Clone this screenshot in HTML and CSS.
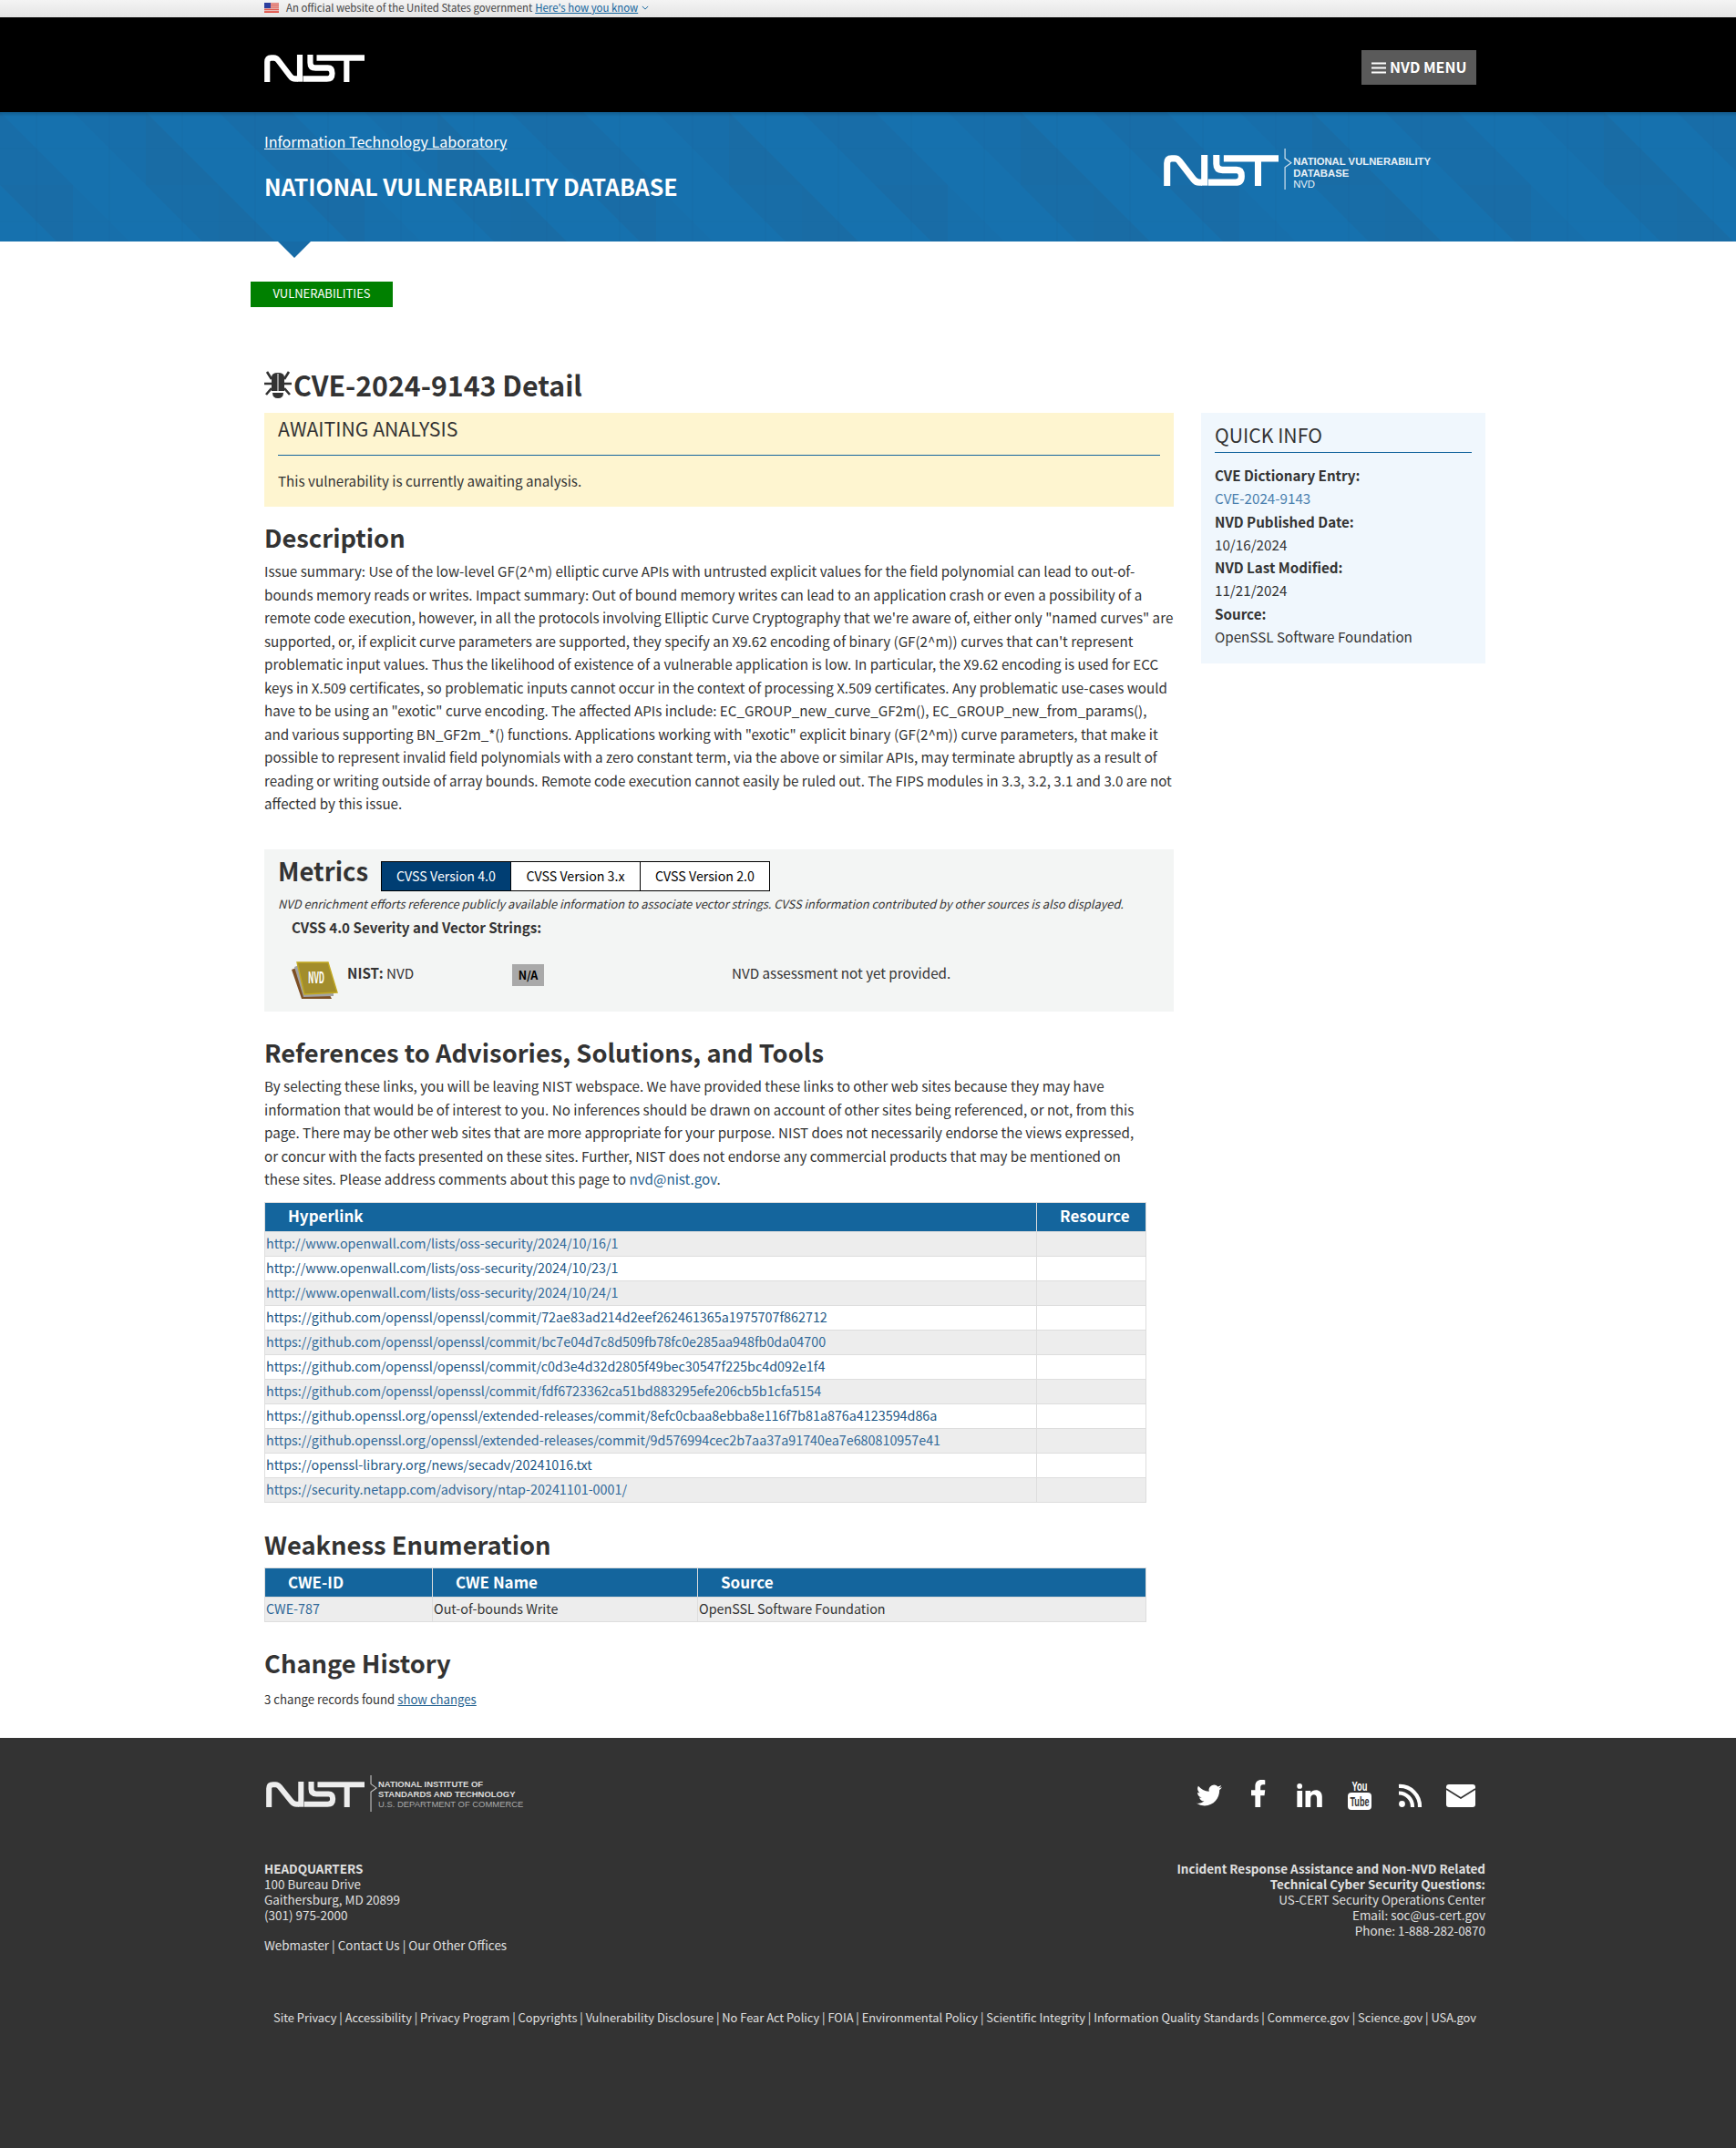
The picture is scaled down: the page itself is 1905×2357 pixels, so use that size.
FILE: index.html
```html
<!DOCTYPE html>
<html lang="en">
<head>
  <meta charset="UTF-8">
  <title>NVD - CVE-2024-9143</title>
  <link rel="stylesheet" href="styles.css">
</head>
<body>

  <svg class="defs" width="0" height="0">
    <symbol id="nist" viewBox="0 0 375 97" preserveAspectRatio="none">
      <g fill="none" stroke="currentColor" stroke-width="21">
        <path d="M11 97V26Q11 11 26 11H36Q45 11 51 19L97 76Q105 86 116 86H125"/>
        <path d="M133 0V96"/>
        <path d="M172 0V28Q172 47 192 47H238Q254 47 254 66Q254 86 234 86H145"/>
        <path d="M196 11H375"/>
        <path d="M308 11V97"/>
      </g>
    </symbol>
    <symbol id="notch" viewBox="0 0 10 46">
      <path d="M1 0V11L8 16L1 21V46" fill="none" stroke="currentColor" stroke-width="1.2"/>
    </symbol>
    <pattern id="tris" width="320" height="160" patternUnits="userSpaceOnUse">
      <rect width="320" height="160" fill="#1671ae"/>
      <polygon points="0,0 80,80 0,80" fill="#186da8"/>
      <polygon points="80,0 160,0 160,80" fill="#176eaa"/>
      <polygon points="160,0 240,80 160,80" fill="#196ca5"/>
      <polygon points="240,0 320,0 320,80" fill="#186da8"/>
      <polygon points="0,80 80,80 80,160" fill="#196ca6"/>
      <polygon points="80,80 160,160 80,160" fill="#176fab"/>
      <polygon points="160,80 240,80 240,160" fill="#186da7"/>
      <polygon points="240,80 320,160 240,160" fill="#196ca5"/>
      <path d="M40 0V160M120 0V160M200 0V160M280 0V160" stroke="#125f96" stroke-opacity=".25" stroke-width="1"/>
      <path d="M0 40H320M0 120H320" stroke="#125f96" stroke-opacity=".12" stroke-width="1"/>
    </pattern>
  </svg>

  <div class="gov-banner">
    <div class="wrap gov-inner">
      <svg class="flag" viewBox="0 0 16 11">
        <rect width="16" height="11" fill="#e8e8e8"/>
        <path d="M0 .8H16M0 2.5H16M0 4.2H16M0 5.9H16M0 7.6H16M0 9.3H16M0 10.5H16" stroke="#e0392b" stroke-width=".9"/>
        <rect width="7" height="6" fill="#2d3f9e"/>
      </svg>
      <span>An official website of the United States government</span>
      <a href="#">Here's how you know</a>
      <svg class="chev" viewBox="0 0 10 6"><path d="M1 1L5 5L9 1" fill="none" stroke="#14659d" stroke-width="1.2"/></svg>
    </div>
  </div>

  <header class="top-bar">
    <div class="wrap top-inner">
      <svg class="logo-main"><use href="#nist"/></svg>
      <button class="menu-btn">
        <svg class="burger" viewBox="0 0 16 13"><path d="M0 1.5H16M0 6.5H16M0 11.5H16" stroke="#fff" stroke-width="2.2"/></svg>
        NVD MENU
      </button>
    </div>
  </header>

  <section class="hero">
    <svg class="hero-bg"><rect width="100%" height="100%" fill="url(#tris)"/></svg>
    <div class="wrap hero-inner">
      <div>
        <a class="itl" href="#">Information Technology Laboratory</a>
        <div class="hero-title">NATIONAL VULNERABILITY DATABASE</div>
      </div>
      <div class="lockup hero-lockup">
        <svg class="lockup-nist"><use href="#nist"/></svg>
        <svg class="lockup-notch"><use href="#notch"/></svg>
        <div class="lockup-text">
          <b>NATIONAL VULNERABILITY</b>
          <b>DATABASE</b>
          <span>NVD</span>
        </div>
      </div>
    </div>
    <div class="hero-arrow"></div>
  </section>

  <main class="wrap">
    <a class="tab-green" href="#">VULNERABILITIES</a>

    <h2 class="page-title">
      <svg class="bug" viewBox="0 0 30 30">
        <path d="M8 7Q8 2 15 2Q22 2 22 7V22H8Z" fill="#333"/>
        <path d="M15 3V22" stroke="#fff" stroke-width="1"/>
        <path d="M9 24H21Q21 30 15 30Q9 30 9 24Z" fill="#333"/>
        <path d="M8 9L3 1M8 14H0M8 19L2 26M22 9L27 1M22 14H30M22 19L28 26" stroke="#333" stroke-width="2.6" fill="none"/>
      </svg>CVE-2024-9143 Detail
    </h2>

    <div class="columns">
      <div class="main-col">
        <div class="notice">
          <h3>AWAITING ANALYSIS</h3>
          <p>This vulnerability is currently awaiting analysis.</p>
        </div>

        <h3 class="section-head desc-head">Description</h3>
        <p class="desc">Issue summary: Use of the low-level GF(2^m) elliptic curve APIs with untrusted explicit values for the field polynomial can lead to out-of-bounds memory reads or writes. Impact summary: Out of bound memory writes can lead to an application crash or even a possibility of a remote code execution, however, in all the protocols involving Elliptic Curve Cryptography that we're aware of, either only "named curves" are supported, or, if explicit curve parameters are supported, they specify an X9.62 encoding of binary (GF(2^m)) curves that can't represent problematic input values. Thus the likelihood of existence of a vulnerable application is low. In particular, the X9.62 encoding is used for ECC keys in X.509 certificates, so problematic inputs cannot occur in the context of processing X.509 certificates. Any problematic use-cases would have to be using an "exotic" curve encoding. The affected APIs include: EC_GROUP_new_curve_GF2m(), EC_GROUP_new_from_params(), and various supporting BN_GF2m_*() functions. Applications working with "exotic" explicit binary (GF(2^m)) curve parameters, that make it possible to represent invalid field polynomials with a zero constant term, via the above or similar APIs, may terminate abruptly as a result of reading or writing outside of array bounds. Remote code execution cannot easily be ruled out. The FIPS modules in 3.3, 3.2, 3.1 and 3.0 are not affected by this issue.</p>

        <div class="metrics">
          <div class="metrics-top">
            <h3>Metrics</h3>
            <div class="tabs">
              <a class="tab active" href="#">CVSS Version 4.0</a>
              <a class="tab" href="#">CVSS Version 3.x</a>
              <a class="tab" href="#">CVSS Version 2.0</a>
            </div>
          </div>
          <p class="metrics-note">NVD enrichment efforts reference publicly available information to associate vector strings. CVSS information contributed by other sources is also displayed.</p>
          <div class="metrics-sub">CVSS 4.0 Severity and Vector Strings:</div>
          <div class="score-row">
            <div class="score-cna">
              <svg class="nvd-book" viewBox="0 0 50 40">
                <polygon points="0,8 5,6 42,36 44,40 11,40" fill="#7d4f24"/>
                <polygon points="3,5 8,3 46,33 46,37 13,38" fill="#a3a3a3"/>
                <polygon points="6,0 40,0 50,33 14,35" fill="#a28d2c" stroke="#c2a920" stroke-width="1.4"/>
                <text class="nvd-book-text" x="27" y="23" text-anchor="middle" textLength="18" lengthAdjust="spacingAndGlyphs">NVD</text>
              </svg>
              <span><b>NIST:</b> NVD</span>
            </div>
            <div><span class="badge">N/A</span></div>
            <div>NVD assessment not yet provided.</div>
          </div>
        </div>

        <h3 class="section-head refs-head">References to Advisories, Solutions, and Tools</h3>
        <p class="refs-text">By selecting these links, you will be leaving NIST webspace. We have provided these links to other web sites because they may have information that would be of interest to you. No inferences should be drawn on account of other sites being referenced, or not, from this page. There may be other web sites that are more appropriate for your purpose. NIST does not necessarily endorse the views expressed, or concur with the facts presented on these sites. Further, NIST does not endorse any commercial products that may be mentioned on these sites. Please address comments about this page to <a href="#">nvd@nist.gov</a>.</p>

        <table class="grid refs-table">
          <thead>
            <tr><th class="col-link">Hyperlink</th><th>Resource</th></tr>
          </thead>
          <tbody>
            <tr><td><a href="#">http://www.openwall.com/lists/oss-security/2024/10/16/1</a></td><td></td></tr>
            <tr><td><a href="#">http://www.openwall.com/lists/oss-security/2024/10/23/1</a></td><td></td></tr>
            <tr><td><a href="#">http://www.openwall.com/lists/oss-security/2024/10/24/1</a></td><td></td></tr>
            <tr><td><a href="#">https://github.com/openssl/openssl/commit/72ae83ad214d2eef262461365a1975707f862712</a></td><td></td></tr>
            <tr><td><a href="#">https://github.com/openssl/openssl/commit/bc7e04d7c8d509fb78fc0e285aa948fb0da04700</a></td><td></td></tr>
            <tr><td><a href="#">https://github.com/openssl/openssl/commit/c0d3e4d32d2805f49bec30547f225bc4d092e1f4</a></td><td></td></tr>
            <tr><td><a href="#">https://github.com/openssl/openssl/commit/fdf6723362ca51bd883295efe206cb5b1cfa5154</a></td><td></td></tr>
            <tr><td><a href="#">https://github.openssl.org/openssl/extended-releases/commit/8efc0cbaa8ebba8e116f7b81a876a4123594d86a</a></td><td></td></tr>
            <tr><td><a href="#">https://github.openssl.org/openssl/extended-releases/commit/9d576994cec2b7aa37a91740ea7e680810957e41</a></td><td></td></tr>
            <tr><td><a href="#">https://openssl-library.org/news/secadv/20241016.txt</a></td><td></td></tr>
            <tr><td><a href="#">https://security.netapp.com/advisory/ntap-20241101-0001/</a></td><td></td></tr>
          </tbody>
        </table>

        <h3 class="section-head cwe-head">Weakness Enumeration</h3>
        <table class="grid cwe-table">
          <thead>
            <tr><th class="col-id">CWE-ID</th><th class="col-name">CWE Name</th><th>Source</th></tr>
          </thead>
          <tbody>
            <tr><td><a href="#">CWE-787</a></td><td>Out-of-bounds Write</td><td>OpenSSL Software Foundation</td></tr>
          </tbody>
        </table>

        <h3 class="section-head hist-head">Change History</h3>
        <p class="hist-text">3 change records found <a href="#">show changes</a></p>
      </div>

      <aside class="quick-info">
        <h3>QUICK INFO</h3>
        <dl>
          <dt>CVE Dictionary Entry:</dt>
          <dd><a href="#">CVE-2024-9143</a></dd>
          <dt>NVD Published Date:</dt>
          <dd>10/16/2024</dd>
          <dt>NVD Last Modified:</dt>
          <dd>11/21/2024</dd>
          <dt>Source:</dt>
          <dd>OpenSSL Software Foundation</dd>
        </dl>
      </aside>
    </div>
  </main>

  <footer class="site-footer">
    <div class="wrap">
      <div class="foot-top">
        <div class="lockup foot-lockup">
          <svg class="lockup-nist"><use href="#nist"/></svg>
          <svg class="lockup-notch"><use href="#notch"/></svg>
          <div class="lockup-text">
            <b>NATIONAL INSTITUTE OF</b>
            <b>STANDARDS AND TECHNOLOGY</b>
            <span>U.S. DEPARTMENT OF COMMERCE</span>
          </div>
        </div>
        <div class="social">
          <svg class="ic-twitter" viewBox="0 0 24 24"><path d="M23.953 4.57a10 10 0 01-2.825.775 4.958 4.958 0 002.163-2.723c-.951.555-2.005.959-3.127 1.184a4.92 4.92 0 00-8.384 4.482C7.69 8.095 4.067 6.13 1.64 3.162a4.822 4.822 0 00-.666 2.475c0 1.71.87 3.213 2.188 4.096a4.904 4.904 0 01-2.228-.616v.06a4.923 4.923 0 003.946 4.827 4.996 4.996 0 01-2.212.085 4.936 4.936 0 004.604 3.417 9.867 9.867 0 01-6.102 2.105c-.39 0-.779-.023-1.17-.067a13.995 13.995 0 007.557 2.209c9.053 0 13.998-7.496 13.998-13.985 0-.21 0-.42-.015-.63A9.935 9.935 0 0024 4.59z"/></svg>
          <svg class="ic-fb" viewBox="7 2 11 20" preserveAspectRatio="none"><path d="M14 13.5h3l.5-4H14v-2c0-1.03.3-2 2-2h1.5V2.14c-.326-.043-1.557-.14-2.857-.14C11.928 2 10 3.657 10 6.7v2.8H7v4h3V22h4v-8.5z"/></svg>
          <svg class="ic-in" viewBox="2.9 3 19.1 18"><path d="M6.94 5a2 2 0 1 1-4-.002 2 2 0 0 1 4 .002zM7 8.48H3V21h4V8.48zm6.32 0H9.34V21h3.94v-6.57c0-3.66 4.77-4 4.77 0V21H22v-7.93c0-6.17-7.06-5.94-8.72-2.91l.04-1.68z"/></svg>
          <svg class="ic-yt" viewBox="0 0 26 33">
            <text class="yt-you" x="13" y="12" text-anchor="middle" textLength="17" lengthAdjust="spacingAndGlyphs">You</text>
            <rect x="0" y="14" width="26" height="19" rx="4"/>
            <text class="yt-tube" x="13" y="29" text-anchor="middle" textLength="21" lengthAdjust="spacingAndGlyphs">Tube</text>
          </svg>
          <svg class="ic-rss" viewBox="0 0 25 25">
            <circle cx="3.5" cy="21.5" r="3.4"/>
            <path d="M0 9.5A15 15 0 0 1 15 25M0 2A22 22 0 0 1 23 25" fill="none" stroke="#fff" stroke-width="4.2"/>
          </svg>
          <svg class="ic-mail" viewBox="0 0 32 25">
            <rect width="32" height="25" rx="3"/>
            <path d="M0 5L16 15L32 5" fill="none" stroke="#333" stroke-width="1.6"/>
          </svg>
        </div>
      </div>

      <div class="foot-info">
        <div>
          <address>
            <b>HEADQUARTERS</b><br>
            100 Bureau Drive<br>
            Gaithersburg, MD 20899<br>
            (301) 975-2000
          </address>
          <p class="foot-contact"><a href="#">Webmaster</a> | <a href="#">Contact Us</a> | <a href="#">Our Other Offices</a></p>
        </div>
        <div class="foot-right">
          <b>Incident Response Assistance and Non-NVD Related</b><br>
          <b>Technical Cyber Security Questions:</b><br>
          US-CERT Security Operations Center<br>
          Email: soc@us-cert.gov<br>
          Phone: 1-888-282-0870
        </div>
      </div>

      <p class="foot-links"><a href="#">Site Privacy</a> | <a href="#">Accessibility</a> | <a href="#">Privacy Program</a> | <a href="#">Copyrights</a> | <a href="#">Vulnerability Disclosure</a> | <a href="#">No Fear Act Policy</a> | <a href="#">FOIA</a> | <a href="#">Environmental Policy</a> | <a href="#">Scientific Integrity</a> | <a href="#">Information Quality Standards</a> | <a href="#">Commerce.gov</a> | <a href="#">Science.gov</a> | <a href="#">USA.gov</a></p>
    </div>
  </footer>

</body>
</html>
```

FILE: styles.css
```css
* {
  box-sizing: border-box;
}

body {
  margin: 0;
  font-family: "Noto Sans CJK SC", "Noto Sans", sans-serif;
  font-size: 15.2px;
  line-height: 25.5px;
  color: #333;
  background: #fff;
}

a {
  color: #1f5f8f;
  text-decoration: none;
}

.defs {
  position: absolute;
}

.wrap {
  width: 1340px;
  margin-left: 290px;
}

/* gov banner */
.gov-banner {
  height: 19px;
  background: linear-gradient(#f4f4f4, #e4e4e4);
  font-size: 11.4px;
  line-height: 17px;
  color: #444;
}

.gov-inner {
  display: flex;
  align-items: center;
  gap: 3px;
}

.flag {
  width: 16px;
  height: 11px;
  margin-right: 5px;
}

.gov-banner a {
  color: #14659d;
  text-decoration: underline;
}

.chev {
  width: 8px;
  height: 5px;
  margin-left: 1px;
}

/* header */
.top-bar {
  height: 104px;
  background: #000;
  color: #fff;
}

.top-inner {
  height: 104px;
  display: flex;
  justify-content: space-between;
  align-items: flex-start;
  padding-right: 10px;
}

.logo-main {
  width: 110px;
  height: 30px;
  margin-top: 41px;
}

.menu-btn {
  display: flex;
  align-items: center;
  gap: 4px;
  width: 126px;
  height: 38px;
  margin-top: 36px;
  padding: 0 0 2px 11px;
  border: 0;
  background: #5a5a5a;
  color: #fff;
  font: bold 16px "Noto Sans CJK SC", sans-serif;
}

.burger {
  width: 16px;
  height: 13px;
  margin-top: 2px;
}

/* blue band */
.hero {
  position: relative;
  height: 142px;
  color: #fff;
}

.hero-bg {
  position: absolute;
  left: 0;
  top: 0;
  width: 100%;
  height: 100%;
}

.hero::before {
  content: "";
  position: absolute;
  left: 0;
  right: 0;
  top: 0;
  height: 5px;
  z-index: 1;
  background: linear-gradient(rgba(0, 0, 0, .18), rgba(0, 0, 0, 0));
}

.hero-inner {
  position: relative;
  display: flex;
  justify-content: space-between;
}

.itl {
  display: block;
  margin-top: 19px;
  color: #fff;
  font-size: 16.1px;
  line-height: 26px;
  text-decoration: underline;
}

.hero-title {
  margin-top: 18px;
  font-size: 24.9px;
  font-weight: bold;
  line-height: 36px;
}

.hero-arrow {
  position: absolute;
  left: 305px;
  top: 142px;
  border-style: solid;
  border-width: 18px 18px 0;
  border-color: #176ba6 transparent transparent;
}

.lockup {
  display: flex;
  align-items: center;
}

.lockup-nist {
  color: #fff;
}

.lockup-notch {
  color: currentColor;
}

.lockup-text {
  display: flex;
  flex-direction: column;
  font-family: "Liberation Sans", sans-serif;
}

.lockup-text b,
.lockup-text span {
  display: block;
  white-space: nowrap;
}

.hero-lockup {
  margin: 40px 60px 0 0;
  height: 45px;
  color: #d5e4ef;
}

.hero-lockup .lockup-nist {
  width: 126px;
  height: 34px;
  margin-top: 3px;
}

.hero-lockup .lockup-notch {
  width: 10px;
  height: 45px;
  margin-left: 6px;
}

.hero-lockup .lockup-text {
  padding-top: 9px;
  font-size: 11.3px;
  line-height: 12.5px;
  color: #e8f0f6;
}

.hero-lockup .lockup-text span {
  font-weight: normal;
}

/* main */
.tab-green {
  display: block;
  width: 156px;
  height: 28px;
  margin: 44px 0 0 -15px;
  background: #008000;
  color: #fff;
  font-size: 13px;
  line-height: 26px;
  text-align: center;
}

.page-title {
  display: flex;
  align-items: center;
  gap: 2px;
  margin: 65px 0 11px;
  font-size: 30.3px;
  line-height: 40px;
  font-weight: bold;
}

.bug {
  width: 30px;
  height: 30px;
}

.columns {
  display: grid;
  grid-template-columns: 998px 312px;
  gap: 30px;
  align-items: start;
}

.notice {
  height: 103px;
  padding: 0 15px;
  background: #fef5d0;
}

.notice h3 {
  margin: 0;
  height: 47px;
  border-bottom: 1px solid #14659d;
  font-size: 21.2px;
  line-height: 34px;
  font-weight: normal;
}

.notice p {
  margin: 15px 0 0;
}

.section-head {
  margin: 0;
  font-size: 27.3px;
  line-height: 40px;
  font-weight: bold;
}

.desc-head {
  margin-top: 13px;
}

.desc {
  width: 998.5px;
  margin: 5px 0 0;
  font-size: 15.18px;
}

/* metrics */
.metrics {
  height: 178px;
  margin-top: 37.5px;
  background: #f3f5f4;
}

.metrics-top {
  display: flex;
  padding: 7px 0 0 15px;
}

.metrics-top h3 {
  margin: 0;
  font-size: 27.5px;
  line-height: 32px;
  font-weight: bold;
  width: 113px;
}

.tabs {
  display: flex;
  margin-top: 6px;
  height: 33px;
  border: 1px solid #000;
  background: #fff;
}

.tab {
  width: 142px;
  color: #000;
  font-size: 14.2px;
  line-height: 30px;
  text-align: center;
  border-left: 1px solid #000;
}

.tab.active {
  width: 141px;
  background: #003e73;
  color: #fff;
  border-left: 0;
}

.metrics-note {
  margin: 3.5px 0 0 15px;
  font-size: 12.85px;
  line-height: 20px;
  font-style: italic;
}

.metrics-sub {
  margin: 3px 0 0 30px;
  font-size: 15.2px;
  line-height: 24px;
  font-weight: bold;
}

.score-row {
  display: grid;
  grid-template-columns: 242px 241px 1fr;
  margin: 27px 0 0 30px;
  line-height: 22px;
}

.score-cna {
  display: flex;
  gap: 11px;
}

.nvd-book {
  width: 50px;
  height: 40px;
  overflow: visible;
}

.nvd-book-text {
  fill: #fff;
  font: bold 17px "Noto Sans CJK SC", sans-serif;
}

.badge {
  display: block;
  width: 35px;
  height: 24px;
  margin-top: 2px;
  background: #a9a9a9;
  color: #000;
  font-size: 12.5px;
  font-weight: bold;
  line-height: 24px;
  text-align: center;
}

/* references */
.refs-head {
  margin-top: 23.5px;
}

.refs-text {
  width: 968px;
  margin: 5.5px 0 0;
}

.grid {
  width: 968px;
  table-layout: fixed;
  border-collapse: collapse;
  font-size: 14.33px;
  line-height: 20px;
}

.grid th {
  height: 32px;
  padding: 0 0 2px 25px;
  background: #14659d;
  border: 1px solid #ddd;
  border-bottom: 0;
  color: #fff;
  font-size: 17px;
  font-weight: bold;
  text-align: left;
}

.grid td {
  height: 27px;
  padding: 0 2px 2px 1px;
  border: 1px solid #ddd;
  white-space: nowrap;
}

.grid tbody tr:nth-child(odd) td {
  background: #ededed;
}

.grid tbody tr:nth-child(odd) a {
  color: #2f6898;
}

.grid tbody tr:nth-child(even) a {
  color: #1c5683;
}

.refs-table {
  margin-top: 12px;
}

.col-link {
  width: 847px;
}

.cwe-head {
  margin-top: 25.5px;
}

.cwe-table {
  margin-top: 6px;
}

.col-id {
  width: 184px;
}

.col-name {
  width: 291px;
}

.hist-head {
  margin-top: 24px;
}

.hist-text {
  margin: 10.5px 0 32px;
  font-size: 13.2px;
  line-height: 20px;
}

.hist-text a {
  text-decoration: underline;
}

/* quick info */
.quick-info {
  height: 275px;
  padding: 0 15px;
  background: #f0f7fd;
}

.quick-info h3 {
  margin: 0;
  height: 44px;
  padding-top: 6px;
  border-bottom: 1px solid #14659d;
  font-size: 21.2px;
  line-height: 36px;
  font-weight: normal;
}

.quick-info dl {
  margin: 12px 0 0;
}

.quick-info dt {
  font-weight: bold;
  height: 25.3px;
}

.quick-info dd {
  margin: 0;
  height: 25.3px;
}

.quick-info a {
  color: #4a7fae;
}

/* footer */
.site-footer {
  height: 450px;
  background: #333;
  color: #e0e0e0;
  font-size: 13.45px;
  line-height: 17px;
}

.site-footer a {
  color: #e0e0e0;
}

.foot-top {
  display: flex;
  justify-content: space-between;
  padding-top: 41px;
}

.foot-lockup {
  height: 40px;
  color: #ccc;
}

.foot-lockup .lockup-nist {
  width: 108px;
  height: 28px;
  margin: 3px 0 0 2px;
  color: #ededed;
}

.foot-lockup .lockup-notch {
  width: 9px;
  height: 40px;
  margin-left: 6px;
}

.foot-lockup .lockup-text {
  padding-top: 2px;
  font-size: 9.45px;
  line-height: 11px;
  color: #ddd;
}

.foot-lockup .lockup-text span {
  color: #aaa;
}

.social {
  display: flex;
  align-items: flex-start;
  margin-right: 11px;
  padding-top: 5px;
  fill: #fff;
}

.social svg {
  display: block;
  overflow: visible;
}

.ic-twitter {
  width: 28px;
  height: 28px;
  margin-top: 3px;
}

.ic-fb {
  width: 16px;
  height: 30px;
  margin-left: 32px;
}

.ic-in {
  width: 28px;
  height: 26px;
  margin: 4px 0 0 34px;
}

.ic-yt {
  width: 26px;
  height: 33px;
  margin-left: 28px;
}

.yt-you {
  font: bold 15px "Liberation Sans", sans-serif;
  fill: #fff;
}

.yt-tube {
  font: bold 15px "Liberation Sans", sans-serif;
  fill: #333;
}

.ic-rss {
  width: 25px;
  height: 25px;
  margin: 5px 0 0 30px;
}

.ic-mail {
  width: 32px;
  height: 25px;
  margin: 5px 0 0 27px;
}

.foot-info {
  display: flex;
  justify-content: space-between;
  margin-top: 54px;
}

address {
  font-style: normal;
}

.foot-contact {
  margin: 16px 0 0;
}

.foot-right {
  text-align: right;
}

.foot-links {
  margin: 61px 0 0;
  font-size: 12.85px;
  line-height: 20px;
  text-align: center;
}
```
